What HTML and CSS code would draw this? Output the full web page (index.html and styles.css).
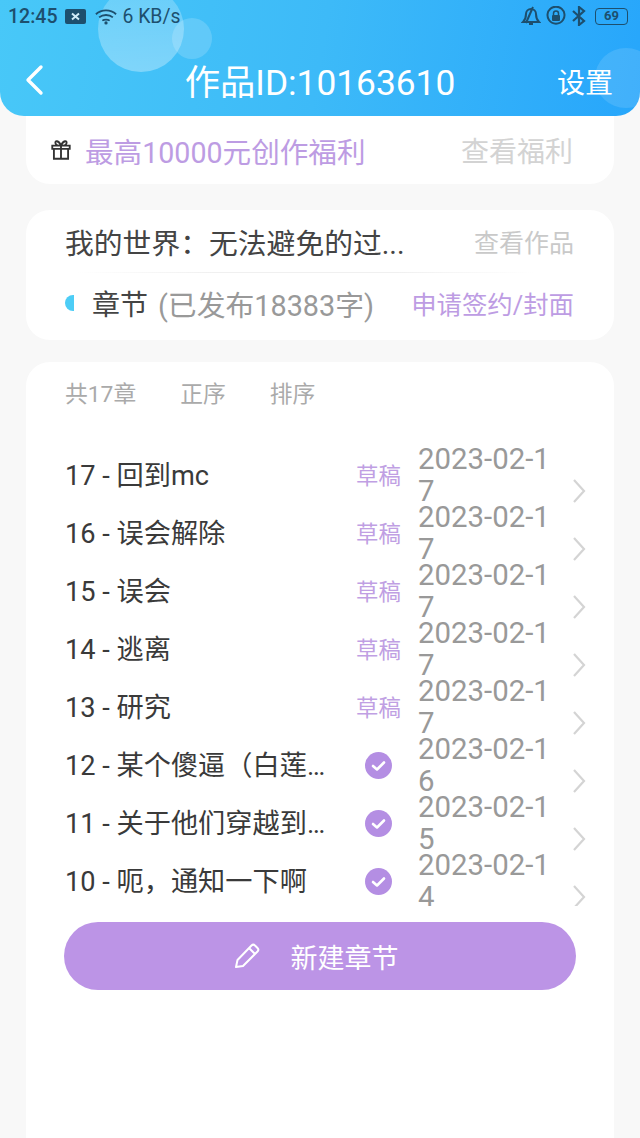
FILE: index.html
```html
<!DOCTYPE html>
<html lang="zh">
<head>
<meta charset="utf-8">
<title>作品</title>
<link rel="stylesheet" href="styles.css">
</head>
<body>
<div class="page">
  <header class="hero">
    <span class="bubble b1"></span><span class="bubble b2"></span><span class="bubble b3"></span>
    <div class="status">
      <div class="status-side">
        <span class="time">12:45</span>
        <svg class="st-x" viewBox="0 0 21 15"><rect width="21" height="15" rx="2" fill="#1d4f6e"/><path d="M7 4.500l7 6M14 4.500l-7 6" stroke="#cfeaf8" stroke-width="2"/></svg>
        <svg class="st-wifi" viewBox="0 0 24 18"><path d="M1 6.500C7 1 17 1 23 6.500M4.500 10C8.500 6.500 15.500 6.500 19.500 10M8 13.500C10 12 14 12 16 13.500" fill="none" stroke="#1d4f6e" stroke-width="2"/><circle cx="12" cy="16" r="1.800" fill="#1d4f6e"/></svg>
        <span class="speed">6 KB/s</span>
      </div>
      <div class="status-side right">
        <svg class="st-ic" viewBox="0 0 20 20"><path d="M2 16c2-2 3-4 3-8a5 5 0 0 1 10 0c0 4 1 6 3 8zM8 18h4M5 17L12 1" fill="none" stroke="#1d4f6e" stroke-width="2"/></svg>
        <svg class="st-ic" viewBox="0 0 20 20"><path d="M3 14A8.500 8.500 0 1 1 17 14M17 14A8.500 8.500 0 0 1 3 14" fill="none" stroke="#1d4f6e" stroke-width="2"/><rect x="6" y="9" width="8" height="6" rx="1" fill="#1d4f6e"/><path d="M7.500 9V7.500a2.500 2.500 0 0 1 5 0V9" fill="none" stroke="#1d4f6e" stroke-width="1.500"/></svg>
        <svg class="st-bt" viewBox="0 0 16 20"><path d="M2 5l11 10-5 4V1l5 4L2 15" fill="none" stroke="#1d4f6e" stroke-width="2.200"/></svg>
        <span class="battery">69</span>
      </div>
    </div>
    <nav class="bar">
      <svg class="back" viewBox="0 0 20 32"><path d="M17 3L4 16l13 13" fill="none" stroke="#fff" stroke-width="3.400" stroke-linecap="round" stroke-linejoin="round"/></svg>
      <h1 class="title">作品ID:10163610</h1>
      <span class="settings">设置</span>
    </nav>
  </header>

  <section class="card promo">
    <svg class="gift" viewBox="0 0 22 22"><path d="M3 7h16v3H3zM4.500 10v9h13v-9M11 7v12M11 7C9 2 5 2 6 5c.3 1 2 2 5 2zM11 7c2-5 6-5 5-2-.3 1-2 2-5 2z" fill="none" stroke="#333" stroke-width="1.700"/></svg>
    <span class="promo-text">最高10000元创作福利</span>
    <span class="promo-link">查看福利</span>
  </section>

  <section class="card work">
    <div class="work-top">
      <span class="work-name">我的世界：无法避免的过...</span>
      <span class="work-link">查看作品</span>
    </div>
    <div class="divider"></div>
    <div class="work-bottom">
      <span class="dot"></span>
      <span class="chap">章节</span>
      <span class="chap-sub">(已发布18383字)</span>
      <span class="sign">申请签约/封面</span>
    </div>
  </section>

  <section class="card chapters">
    <div class="tabs"><span>共17章</span><span>正序</span><span>排序</span></div>
    <div class="list">
      <div class="row"><span class="name">17 - 回到mc</span><span class="state draft">草稿</span><span class="date">2023-02-17</span><svg class="chev" viewBox="0 0 14 26"><path d="M2 2l10 11L2 24" fill="none" stroke="#d4d4d4" stroke-width="2.200"/></svg></div>
      <div class="row"><span class="name">16 - 误会解除</span><span class="state draft">草稿</span><span class="date">2023-02-17</span><svg class="chev" viewBox="0 0 14 26"><path d="M2 2l10 11L2 24" fill="none" stroke="#d4d4d4" stroke-width="2.200"/></svg></div>
      <div class="row"><span class="name">15 - 误会</span><span class="state draft">草稿</span><span class="date">2023-02-17</span><svg class="chev" viewBox="0 0 14 26"><path d="M2 2l10 11L2 24" fill="none" stroke="#d4d4d4" stroke-width="2.200"/></svg></div>
      <div class="row"><span class="name">14 - 逃离</span><span class="state draft">草稿</span><span class="date">2023-02-17</span><svg class="chev" viewBox="0 0 14 26"><path d="M2 2l10 11L2 24" fill="none" stroke="#d4d4d4" stroke-width="2.200"/></svg></div>
      <div class="row"><span class="name">13 - 研究</span><span class="state draft">草稿</span><span class="date">2023-02-17</span><svg class="chev" viewBox="0 0 14 26"><path d="M2 2l10 11L2 24" fill="none" stroke="#d4d4d4" stroke-width="2.200"/></svg></div>
      <div class="row"><span class="name">12 - 某个傻逼（白莲花）穿越</span><span class="state"><svg class="ok" viewBox="0 0 27 27"><circle cx="13.500" cy="13.500" r="13.500" fill="#b48ee3"/><path d="M8 14l4 3.500 7-7" fill="none" stroke="#fff" stroke-width="2.600" stroke-linecap="round" stroke-linejoin="round"/></svg></span><span class="date">2023-02-16</span><svg class="chev" viewBox="0 0 14 26"><path d="M2 2l10 11L2 24" fill="none" stroke="#d4d4d4" stroke-width="2.200"/></svg></div>
      <div class="row"><span class="name">11 - 关于他们穿越到这里的事</span><span class="state"><svg class="ok" viewBox="0 0 27 27"><circle cx="13.500" cy="13.500" r="13.500" fill="#b48ee3"/><path d="M8 14l4 3.500 7-7" fill="none" stroke="#fff" stroke-width="2.600" stroke-linecap="round" stroke-linejoin="round"/></svg></span><span class="date">2023-02-15</span><svg class="chev" viewBox="0 0 14 26"><path d="M2 2l10 11L2 24" fill="none" stroke="#d4d4d4" stroke-width="2.200"/></svg></div>
      <div class="row"><span class="name">10 - 呃，通知一下啊</span><span class="state"><svg class="ok" viewBox="0 0 27 27"><circle cx="13.500" cy="13.500" r="13.500" fill="#b48ee3"/><path d="M8 14l4 3.500 7-7" fill="none" stroke="#fff" stroke-width="2.600" stroke-linecap="round" stroke-linejoin="round"/></svg></span><span class="date">2023-02-14</span><svg class="chev" viewBox="0 0 14 26"><path d="M2 2l10 11L2 24" fill="none" stroke="#d4d4d4" stroke-width="2.200"/></svg></div>
    </div>
    <button class="create" type="button">
      <svg class="pen" viewBox="0 0 28 28"><path d="M3 25l1.500-7L18.500 3.500a2.500 2.500 0 0 1 3.500 0l2.500 2.500a2.500 2.500 0 0 1 0 3.500L10 24zM16 6l6 6" fill="none" stroke="#fff" stroke-width="2" stroke-linejoin="round"/></svg>
      <span>新建章节</span>
    </button>
  </section>
</div>
</body>
</html>
```

FILE: styles.css
```css
* { box-sizing: border-box; }
html, body { margin: 0; padding: 0; }
body {
  background: #f8f8f8;
  font-family: Roboto, "Noto Sans CJK SC", sans-serif;
  color: #333;
}
.page {
  width: 640px;
  height: 1138px;
  display: flex;
  flex-direction: column;
  overflow: hidden;
}
.hero {
  position: relative;
  height: 116px;
  flex: none;
  overflow: hidden;
  border-radius: 0 0 24px 24px;
  background: linear-gradient(100deg, #48c8f8 0%, #3dbaf8 50%, #27a6fb 100%);
}
.bubble { position: absolute; border-radius: 50%; }
.b1 { left: 98px; top: -14px; width: 86px; height: 86px; background: linear-gradient(180deg, rgba(255,255,255,.2), rgba(255,255,255,.32)); }
.b2 { left: 172px; top: 18px; width: 40px; height: 41px; background: rgba(255,255,255,.17); }
.b3 { left: 595px; top: 48px; width: 62px; height: 60px; background: rgba(255,255,255,.12); }
.status {
  position: relative;
  height: 32px;
  padding: 0 10px 0 8px;
  display: flex;
  justify-content: space-between;
  align-items: center;
  color: #1d4f6e;
}
.status-side { display: flex; align-items: center; }
.time { font-size: 19.500px; font-weight: 500; }
.st-x { width: 21px; height: 15px; margin-left: 8px; }
.st-wifi { width: 22px; height: 17px; margin-left: 9px; }
.speed { font-size: 19.400px; margin-left: 5px; }
.st-ic { width: 20px; height: 20px; margin-right: 5px; }
.st-bt { width: 16px; height: 20px; margin-right: 8px; }
.right { margin-right: 2px; }
.battery {
  width: 33px;
  height: 17px;
  border: 1.500px solid #1d4f6e;
  border-radius: 4px;
  font-size: 13px;
  font-weight: 700;
  line-height: 14px;
  text-align: center;
}
.bar {
  position: relative;
  height: 84px;
  padding: 20px 27px 0;
  display: grid;
  grid-template-columns: 1fr auto 1fr;
  align-items: center;
  color: #fff;
}
.back { width: 20px; height: 32px; margin: 0 0 8px -3px; }
.title { margin: 0; font-size: 35.300px; font-weight: 400; line-height: 1; }
.settings { font-size: 28px; justify-self: end; margin-bottom: 6px; }

.card { background: #fff; margin: 0 26px; }
.promo {
  height: 68px;
  border-radius: 0 0 24px 24px;
  padding: 0 41px 0 23px;
  display: flex;
  align-items: center;
}
.gift { width: 24px; height: 24px; margin-right: 12px; }
.promo-text { flex: 1; font-size: 28.600px; color: #bd9ce3; white-space: nowrap; }
.promo-link { font-size: 28px; color: #d3d3d3; }

.work {
  margin-top: 26px;
  height: 130px;
  border-radius: 24px;
  padding: 0 40px 0 39px;
}
.work-top { height: 62px; display: flex; align-items: center; justify-content: space-between; }
.work-name { font-size: 28.800px; color: #444; white-space: nowrap; }
.work-link { font-size: 25px; color: #c9c9c9; }
.divider {
  height: 1px;
  margin: 0 40px 0 12px;
  background: linear-gradient(90deg, #fff, #f0f0f0 30%, #f0f0f0 70%, #fff);
}
.work-bottom { height: 60px; display: flex; align-items: center; }
.dot {
  width: 9px;
  height: 16px;
  background: #4dcdf6;
  border-radius: 9px 0 0 9px;
}
.chap { margin-left: 18px; font-size: 28px; color: #444; }
.chap-sub { margin-left: 10px; flex: 1; font-size: 28.800px; color: #999; white-space: nowrap; }
.sign { font-size: 25.400px; color: #bd9ce3; white-space: nowrap; }

.chapters {
  margin-top: 22px;
  flex: 1;
  border-radius: 24px 24px 0 0;
  padding-top: 14px;
}
.tabs {
  height: 32px;
  padding-left: 39px;
  display: flex;
  gap: 44px;
  align-items: center;
  font-size: 22.800px;
  color: #aaa;
}
.list { margin-top: 38px; height: 460px; overflow: hidden; }
.row { height: 58px; padding-left: 39px; display: flex; align-items: center; }
.name {
  width: 272px;
  flex: none;
  padding: 0 6px 4px 0;
  font-size: 27.200px;
  color: #3a3a3a;
  white-space: nowrap;
  overflow: hidden;
  text-overflow: ellipsis;
}
.state {
  width: 83px;
  flex: none;
  display: flex;
  justify-content: center;
  font-size: 22.400px;
  color: #c09fe3;
}
.draft { padding-bottom: 3px; }
.ok { width: 27px; height: 27px; }
.date {
  width: 136px;
  flex: none;
  margin-left: -2px;
  font-size: 29.400px;
  line-height: 32px;
  color: #999;
  word-break: break-all;
}
.chev { width: 14px; height: 26px; margin: 32px 0 0 18px; flex: none; }
.create {
  display: flex;
  align-items: center;
  justify-content: center;
  width: 512px;
  height: 68px;
  margin: 16px 0 0 38px;
  padding: 0 9px 0 0;
  border: 0;
  border-radius: 34px;
  background: #bc94e6;
  color: #fff;
  font: inherit;
  font-size: 27px;
}
.pen { width: 28px; height: 28px; margin-right: 30px; }
```
